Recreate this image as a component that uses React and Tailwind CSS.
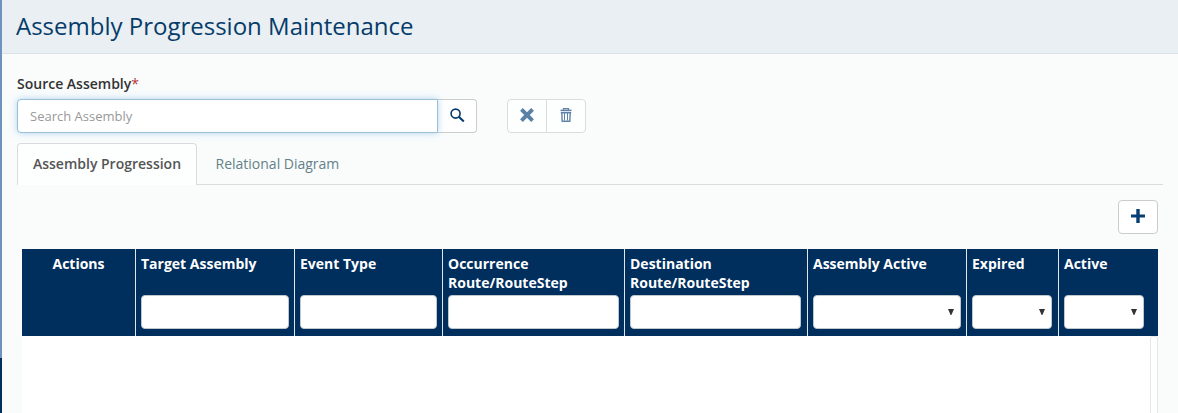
import React from "react";

const columns = [
  { label: "Target Assembly", width: "w-[159px]", kind: "text" },
  { label: "Event Type", width: "w-[148px]", kind: "text" },
  { label: "Occurrence Route/RouteStep", width: "w-[182px]", kind: "text" },
  { label: "Destination Route/RouteStep", width: "w-[183px]", inset: "pr-[6px]", kind: "text" },
  { label: "Assembly Active", width: "w-[159px]", kind: "select" },
  { label: "Expired", width: "w-[92px]", inset: "pr-[6px]", kind: "select" },
  { label: "Active", width: "w-[99px]", inset: "pr-[14px]", kind: "select", last: true },
];

function SearchIcon() {
  return (
    <svg className="mb-[2px]" width="15" height="15" viewBox="0 0 15 15" fill="none" stroke="#073b6b">
      <circle cx="5.6" cy="5.6" r="4.5" strokeWidth="1.6" />
      <path d="M8.8 8.8L13.8 13.6" strokeWidth="2.1" />
    </svg>
  );
}

function RemoveIcon() {
  return (
    <svg className="mb-[2px]" width="14" height="14" viewBox="0 0 14 14" fill="#5a80a5">
      <path d="M2.8 0.1L7 4.2L11.2 0.1L13.9 2.8L9.8 7L13.9 11.2L11.2 13.9L7 9.8L2.8 13.9L0.1 11.2L4.2 7L0.1 2.8Z" />
    </svg>
  );
}

function TrashIcon() {
  return (
    <svg className="mb-[2px]" width="12" height="14" viewBox="0 0 12 14" fill="none" stroke="#5f83a7">
      <path d="M3.5 2V0.6H8.5V2" strokeWidth="1.2" />
      <path d="M0.5 2.4H11.5" strokeWidth="1.5" />
      <path d="M0.8 4.7H11.2" strokeWidth="1.5" />
      <path d="M1.8 4.5L2.2 13.3H9.8L10.2 4.5" strokeWidth="1.4" />
      <path d="M4.5 5V12.5M7.5 5V12.5" strokeWidth="1" />
    </svg>
  );
}

function PlusIcon() {
  return (
    <svg className="mb-[2px]" width="14" height="14" viewBox="0 0 14 14" fill="#073f72">
      <path d="M5.3 0H8.7V5.5H14V8.5H8.7V14H5.3V8.5H0V5.5H5.3Z" />
    </svg>
  );
}

function HeaderCell({ label, width, inset = "pr-[5px]", kind, last }) {
  return (
    <div
      className={`${width} ${inset} flex flex-col justify-between pt-[5px] pb-[7px] pl-[5px] ${
        last ? "" : "border-r border-[#dfe6ed]"
      }`}
    >
      <div className="text-[14px] leading-[19px] font-bold text-white">{label}</div>
      {kind === "text" ? (
        <input className="h-[34px] w-full rounded-[4px] border border-[#bfc7cf] bg-white px-2 outline-none" />
      ) : (
        <button className="flex h-[34px] w-full items-center justify-end rounded-[4px] border border-[#bfc7cf] bg-white pr-[6px]">
          <svg width="6" height="6" viewBox="0 0 6 6" fill="#333333">
            <path d="M0 0H6L3.4 6H2.6Z" />
          </svg>
        </button>
      )}
    </div>
  );
}

export default function App() {
  return (
    <div className="flex h-[413px] w-[1178px] overflow-hidden bg-[#fafcfc] font-['Open_Sans',sans-serif]">
      <div className="flex w-[2px] shrink-0 flex-col bg-[#002e5d]">
        <div className="h-[358px] bg-[#6e94bd]" />
      </div>
      <div className="flex min-w-0 flex-1 flex-col">
        <header className="flex h-[54px] shrink-0 items-center border-b border-[#dae3ea] bg-[#eaeff3] pb-[2px] pl-[14px]">
          <h1 className="text-[24px] leading-[32px] text-[#063c6a]">
            Assembly Progression Maintenance
          </h1>
        </header>
        <main className="flex flex-1 flex-col pl-[15px]">
          <label className="mt-[20px] text-[14px] leading-[20px] font-semibold text-[#333333]">
            Source Assembly<span className="font-normal text-[#b5363a]">*</span>
          </label>
          <div className="mt-[5px] flex h-[34px]">
            <input
              placeholder="Search Assembly"
              className="relative w-[421px] rounded-l-[4px] border border-[#9bbfd3] bg-white px-3 pt-[2px] text-[13px] text-[#555555] shadow-[0_0_7px_rgba(102,175,233,0.5)] outline-none placeholder:text-[#999999]"
            />
            <button className="flex w-[39px] items-center justify-center rounded-r-[4px] border border-l-0 border-[#cccccc] bg-white">
              <SearchIcon />
            </button>
            <div className="ml-[30px] flex w-[79px] rounded-[4px] border border-[#d9dcde] bg-[#fdfefe]">
              <button className="flex w-[39px] items-center justify-center border-r border-[#d9dcde]">
                <RemoveIcon />
              </button>
              <button className="flex flex-1 items-center justify-center">
                <TrashIcon />
              </button>
            </div>
          </div>
          <nav className="mt-[10px] flex h-[42px] w-[1146px] text-[14px]">
            <div className="flex w-[180px] items-center justify-center rounded-t-[4px] border border-b-0 border-[#d9dcde] bg-[#fdfefe] pb-[2px] font-semibold text-[#555555]">
              Assembly Progression
            </div>
            <div className="flex flex-1 items-center border-b border-[#d9dcde] pl-[18.5px] text-[#648189]">
              Relational Diagram
            </div>
          </nav>
          <div className="mt-[15px] flex w-[1141px] justify-end">
            <button className="flex h-[34px] w-[40px] items-center justify-center rounded-[4px] border border-[#cccccc] bg-white">
              <PlusIcon />
            </button>
          </div>
          <section className="mt-[15px] ml-[5px] flex w-[1136px] flex-1 flex-col">
            <div className="flex h-[87px] bg-[#002e5d]">
              <div className="w-[114px] border-r border-[#dfe6ed] pt-[5px] text-center text-[14px] leading-[19px] font-bold text-white">
                Actions
              </div>
              {columns.map((column) => (
                <HeaderCell key={column.label} {...column} />
              ))}
            </div>
            <div className="flex flex-1 justify-end bg-white">
              <div className="w-[8px] rounded-t-[3px] border border-b-0 border-[#e5e7ea]" />
            </div>
          </section>
        </main>
      </div>
    </div>
  );
}
